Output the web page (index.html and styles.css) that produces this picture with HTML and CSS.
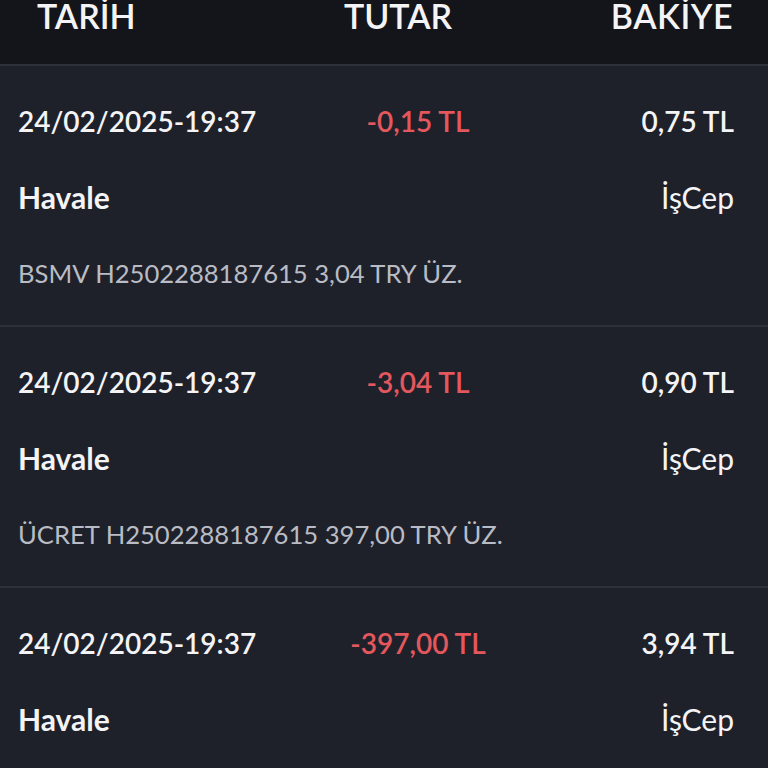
FILE: index.html
```html
<!DOCTYPE html>
<html lang="tr">
<head>
	<meta charset="utf-8" />
	<title>Hesap Hareketleri</title>
	<link rel="stylesheet" href="styles.css">
</head>
<body>
	<div class="head">
		<span class="head_date">TARİH</span>
		<span class="head_amount">TUTAR</span>
		<span class="head_balance">BAKİYE</span>
	</div>

	<div class="list">
		<div class="item">
			<div class="item_top">
				<span class="date">24/02/2025-19:37</span>
				<span class="amount">-0,15 TL</span>
				<span class="balance">0,75 TL</span>
			</div>
			<div class="item_mid">
				<span class="type">Havale</span>
				<span class="channel">İşCep</span>
			</div>
			<div class="desc">BSMV H2502288187615 3,04 TRY ÜZ.</div>
		</div>

		<div class="item">
			<div class="item_top">
				<span class="date">24/02/2025-19:37</span>
				<span class="amount">-3,04 TL</span>
				<span class="balance">0,90 TL</span>
			</div>
			<div class="item_mid">
				<span class="type">Havale</span>
				<span class="channel">İşCep</span>
			</div>
			<div class="desc">ÜCRET H2502288187615 397,00 TRY ÜZ.</div>
		</div>

		<div class="item">
			<div class="item_top">
				<span class="date">24/02/2025-19:37</span>
				<span class="amount">-397,00 TL</span>
				<span class="balance">3,94 TL</span>
			</div>
			<div class="item_mid">
				<span class="type">Havale</span>
				<span class="channel">İşCep</span>
			</div>
			<div class="desc">FAST H2502288187615 397,00 TRY ÜZ.</div>
		</div>
	</div>
</body>
</html>
```

FILE: styles.css
```css
html, body{
	margin: 0;
	padding: 0;
	height: 100%;
	overflow: hidden;
}

body{
	background-color: #1f212a;
	font-family: Lato, "Noto Sans", sans-serif;
	color: #f4f4f6;
}

.head{
	display: grid;
	grid-template-columns: 261px 200px 1fr;
	height: 64px;
	padding: 0 35px 0 37px;
	background-color: #14151b;
	font-size: 34px;
	font-weight: 600;
	line-height: 32px;
}
	.head_amount{
		text-align: center;
	}
	.head_balance{
		text-align: right;
		letter-spacing: 0.5px;
	}

.item{
	box-sizing: border-box;
	height: 261px;
	padding: 38px 34px 0 18px;
	border-top: 2px solid #2e313a;
}

	.item_top{
		display: grid;
		grid-template-columns: 300px 200px 1fr;
		font-size: 28px;
		font-weight: 600;
		line-height: 34px;
	}
	.amount{
		text-align: center;
		color: #e4575d;
	}
	.balance{
		text-align: right;
	}

	.item_mid{
		display: flex;
		justify-content: space-between;
		margin-top: 42px;
		font-size: 30px;
		line-height: 34px;
	}
	.type{
		font-weight: 700;
	}
	.channel{
		font-weight: 400;
	}

	.desc{
		margin-top: 44px;
		font-size: 25.6px;
		line-height: 30px;
		color: #b9bcc5;
	}
```
